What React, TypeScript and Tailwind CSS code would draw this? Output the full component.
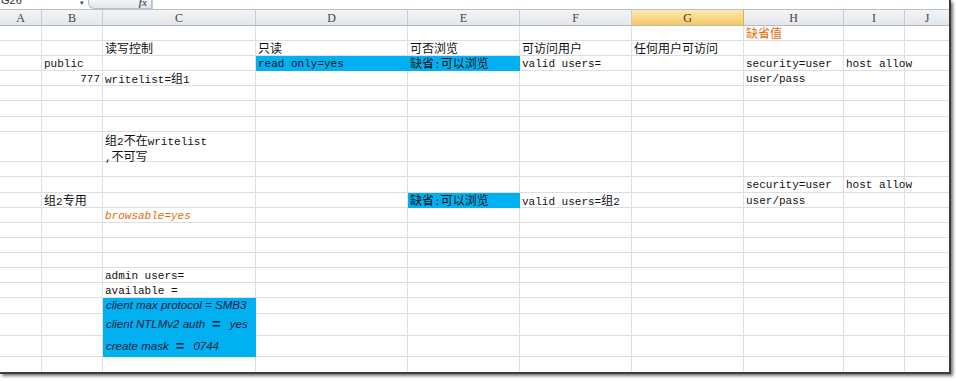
import React from 'react';

type Cell = {
  text: string;
  kind?: 'plain' | 'orange' | 'orangeItalic' | 'blue' | 'blueNote' | 'right';
};

const COLS = ['A', 'B', 'C', 'D', 'E', 'F', 'G', 'H', 'I', 'J'];
const WIDTHS = ['w-[42px]', 'w-[61px]', 'w-[153px]', 'w-[152px]', 'w-[112px]', 'w-[112px]', 'w-[112px]', 'w-[100px]', 'w-[61px]', 'w-[45px]'];
const HEIGHTS = ['h-[15px]', 'h-[15px]', 'h-[15px]', 'h-[15px]', 'h-[15px]', 'h-[16px]', 'h-[15px]', 'h-[30px]', 'h-[15px]', 'h-[16px]', 'h-[15px]', 'h-[15px]', 'h-[15px]', 'h-[15px]', 'h-[15px]', 'h-[15px]', 'h-[15px]', 'h-[16px]', 'h-[22px]', 'h-[21px]', 'h-[16px]'];

const cells: Record<string, Cell> = {
  '1H': { text: '缺省值', kind: 'orange' },
  '2C': { text: '读写控制' },
  '2D': { text: '只读' },
  '2E': { text: '可否浏览' },
  '2F': { text: '可访问用户' },
  '2G': { text: '任何用户可访问' },
  '3B': { text: 'public' },
  '3D': { text: 'read only=yes', kind: 'blue' },
  '3E': { text: '缺省:可以浏览', kind: 'blue' },
  '3F': { text: 'valid users=' },
  '3H': { text: 'security=user' },
  '3I': { text: 'host allow' },
  '4B': { text: '777', kind: 'right' },
  '4C': { text: 'writelist=组1' },
  '4H': { text: 'user/pass' },
  '8C': { text: '组2不在writelist\n,不可写' },
  '10H': { text: 'security=user' },
  '10I': { text: 'host allow' },
  '11B': { text: '组2专用' },
  '11E': { text: '缺省:可以浏览', kind: 'blue' },
  '11F': { text: 'valid users=组2' },
  '11H': { text: 'user/pass' },
  '12C': { text: 'browsable=yes', kind: 'orangeItalic' },
  '16C': { text: 'admin users=' },
  '17C': { text: 'available =' },
  '18C': { text: 'client max protocol = SMB3', kind: 'blueNote' },
  '19C': { text: 'client NTLMv2 auth|yes', kind: 'blueNote' },
  '20C': { text: 'create mask|0744', kind: 'blueNote' },
};

// CJK runs get the slightly larger size, like SimSun next to its half-width Latin
const Mixed = ({ s }: { s: string }) => (
  <>
    {s.split(/([\u3000-\u9fff\uff00-\uffef]+)/).map((p, i) =>
      i % 2 ? (
        <span key={i} className="text-[12px] leading-[13px] font-['Noto_Sans_CJK_SC']">{p}</span>
      ) : (
        <React.Fragment key={i}>{p}</React.Fragment>
      )
    )}
  </>
);

const Note = ({ s }: { s: string }) => {
  if (!s.includes('|')) return <span>{s}</span>;
  const [a, b] = s.split('|');
  return (
    <span className="flex items-center">
      <span>{a}</span>
      <span className="not-italic font-bold text-[15px] leading-[15px] ml-[7px] mr-[9px] -mt-[3px]">=</span>
      <span>{b}</span>
    </span>
  );
};

const SheetCell = ({ row, col, w }: { row: number; col: string; w: string }) => {
  const c = cells[`${row}${col}`];
  const blue = c && (c.kind === 'blue' || c.kind === 'blueNote');
  const base = `${w} h-full shrink-0 border-r border-b relative ${blue ? 'bg-[#00b0f0] border-[#00b0f0]' : 'border-[#dcdee0]'}`;
  if (!c) return <div className={base} />;
  if (c.kind === 'blueNote') {
    return (
      <div className={`${base} flex items-center px-[3px] pt-[1px] font-['Liberation_Sans'] italic text-[11.5px] text-[#0b2240]`}>
        <Note s={c.text} />
      </div>
    );
  }
  const lines = c.text.split('\n');
  const color =
    c.kind === 'orange' || c.kind === 'orangeItalic' ? 'text-[#e46c0a]' : 'text-[#111]';
  return (
    <div
      className={`${base} flex flex-col ${lines.length > 1 ? 'justify-start pt-[1px]' : 'justify-center pt-[1px]'} ${
        c.kind === 'right' ? 'items-end pr-[2px]' : 'items-start pl-[2px]'
      } font-['Liberation_Mono','Noto_Sans_CJK_SC',monospace] text-[11px] leading-[14px] ${color} ${
        c.kind === 'orangeItalic' ? 'italic' : ''
      }`}
    >
      {lines.map((l, i) => (
        <div key={i} className="whitespace-nowrap">
          <Mixed s={l} />
        </div>
      ))}
    </div>
  );
};

export default function App() {
  return (
    <div className="w-[956px] h-[381px] bg-white">
      <div className="w-[951px] h-[374px] overflow-hidden bg-white border-r-2 border-b-2 border-[#3a3a3a] shadow-[2px_2px_3px_rgba(0,0,0,0.55)]">
        {/* formula bar, cut off at the top */}
        <div className="h-[10px] flex items-end border-b border-[#b9c1cb] relative overflow-hidden">
          <div className="h-[9px] w-[80px] flex items-end pl-[1px] font-['Liberation_Sans'] text-[11px] leading-[11px] text-[#333] overflow-hidden">
            <span className="translate-y-[-3px]">G26</span>
          </div>
          <div className="h-[9px] w-[8px] text-[7px] leading-[5px] text-[#444]">▾</div>
          <div className="h-[9px] w-[64px] rounded-bl-[6px] border border-t-0 border-[#b7bec8] bg-gradient-to-b from-[#f4f5f7] to-[#e2e6ea] flex items-start justify-end pr-[4px]">
            <span className="font-['Liberation_Serif'] italic font-bold text-[10px] leading-[8px] text-[#555] translate-y-[-1px]">fx</span>
          </div>
          <div className="h-[9px] flex-1 border-l border-[#c9ced6]" />
        </div>
        {/* column headers */}
        <div className="h-[16px] flex border-b border-[#b3bac3]">
          {COLS.map((c, i) => (
            <div
              key={c}
              className={`${WIDTHS[i]} h-full shrink-0 border-r flex items-center justify-center font-['Liberation_Serif'] text-[12px] ${
                c === 'G'
                  ? 'bg-gradient-to-b from-[#fde9b0] to-[#f6c85d] border-[#e0b24c] text-[#3a3a3a]'
                  : 'bg-gradient-to-b from-[#f3f4f6] to-[#e3e6ea] border-[#c6cbd2] text-[#444]'
              }`}
            >
              {c}
            </div>
          ))}
        </div>
        {/* grid body */}
        {HEIGHTS.map((h, r) => (
          <div key={r} className={`${h} flex`}>
            {COLS.map((c, i) => (
              <SheetCell key={c} row={r + 1} col={c} w={WIDTHS[i]} />
            ))}
          </div>
        ))}
      </div>
    </div>
  );
}
